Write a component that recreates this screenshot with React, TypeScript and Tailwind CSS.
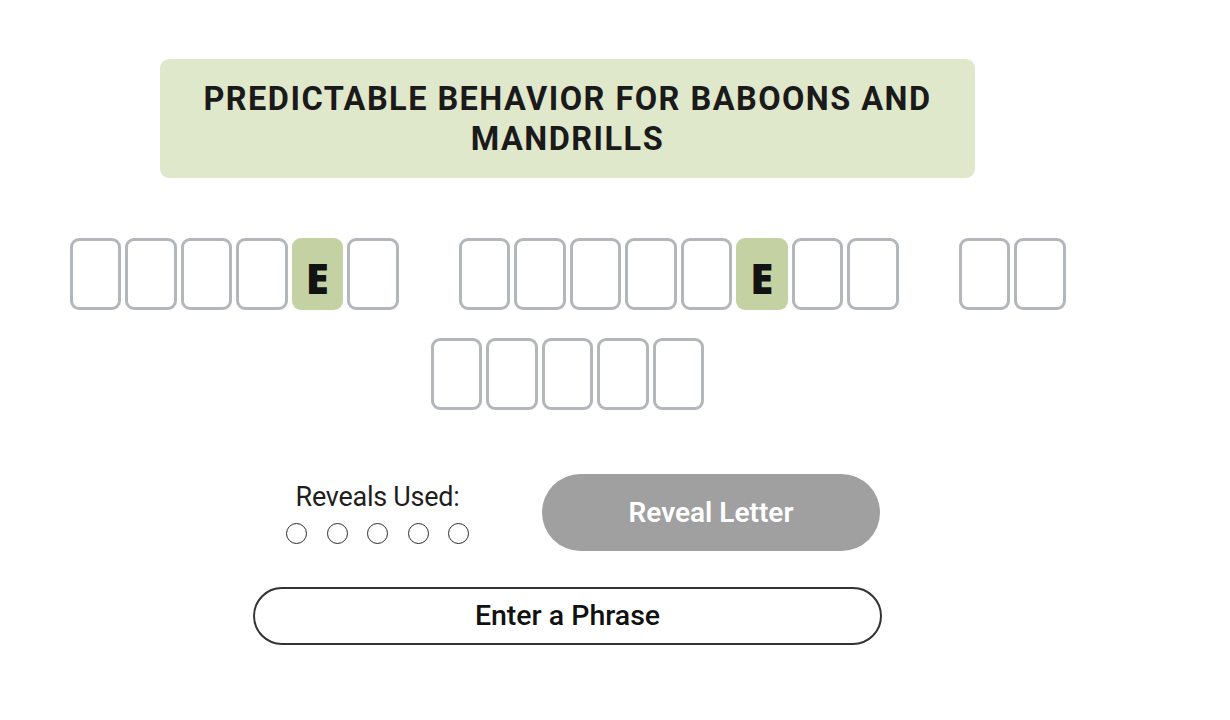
import React from "react";

const words: string[][] = [
  ["", "", "", "", "E", ""],
  ["", "", "", "", "", "E", "", ""],
  ["", ""],
];
const words2: string[][] = [["", "", "", "", ""]];

function Tile({ ch }: { ch: string }) {
  if (ch) {
    return (
      <div className="w-[51.5px] h-[72px] rounded-[9px] bg-[#c4d1a3] flex items-center justify-center pt-[8px] text-[42px] font-extrabold text-[#121212] font-['Open_Sans',sans-serif] leading-none">
        {ch}
      </div>
    );
  }
  return <div className="w-[51.5px] h-[72px] rounded-[9px] border-[3px] border-[#b3b6bb] bg-white" />;
}

function Row({ ws }: { ws: string[][] }) {
  return (
    <div className="flex justify-center gap-x-[60px]">
      {ws.map((w, i) => (
        <div key={i} className="flex gap-[4px]">
          {w.map((c, j) => (
            <Tile key={j} ch={c} />
          ))}
        </div>
      ))}
    </div>
  );
}

export default function App() {
  return (
    <div className="w-[1135px] min-h-[720px] bg-white flex flex-col items-center pt-[59px]">
      <div className="w-[815px] h-[119px] rounded-[9px] bg-[#e0e8cc] flex items-center justify-center text-center px-[20px]">
        <div className="font-['Roboto',sans-serif] font-bold text-[32.5px] leading-[40px] tracking-[0.045em] text-[#1a1a1a]">
          PREDICTABLE BEHAVIOR FOR BABOONS AND
          <br />
          MANDRILLS
        </div>
      </div>
      <div className="mt-[60px] flex flex-col gap-[28px]">
        <Row ws={words} />
        <Row ws={words2} />
      </div>
      <div className="mt-[64px] w-[629px] flex flex-col">
        <div className="flex items-center pl-[32px] gap-[72px]">
          <div className="w-[185px] flex flex-col items-center">
            <div className="font-['Roboto',sans-serif] text-[27px] leading-[30px] text-[#1e1e1e] tracking-[-0.01em]">
              Reveals Used:
            </div>
            <div className="mt-[11px] flex gap-[19.5px]">
              {[0, 1, 2, 3, 4].map((i) => (
                <div key={i} className="w-[21px] h-[21px] rounded-full border-[1.8px] border-[#2a2a2a]" />
              ))}
            </div>
          </div>
          <button className="w-[338px] h-[77px] rounded-full bg-[#a0a0a0] text-white font-['Roboto',sans-serif] font-semibold text-[28px]">
            Reveal Letter
          </button>
        </div>
        <button className="mt-[36px] w-[629px] h-[58px] rounded-full border-2 border-[#333] bg-white text-[#111] font-['Roboto',sans-serif] font-medium text-[28.5px]">
          Enter a Phrase
        </button>
      </div>
    </div>
  );
}
